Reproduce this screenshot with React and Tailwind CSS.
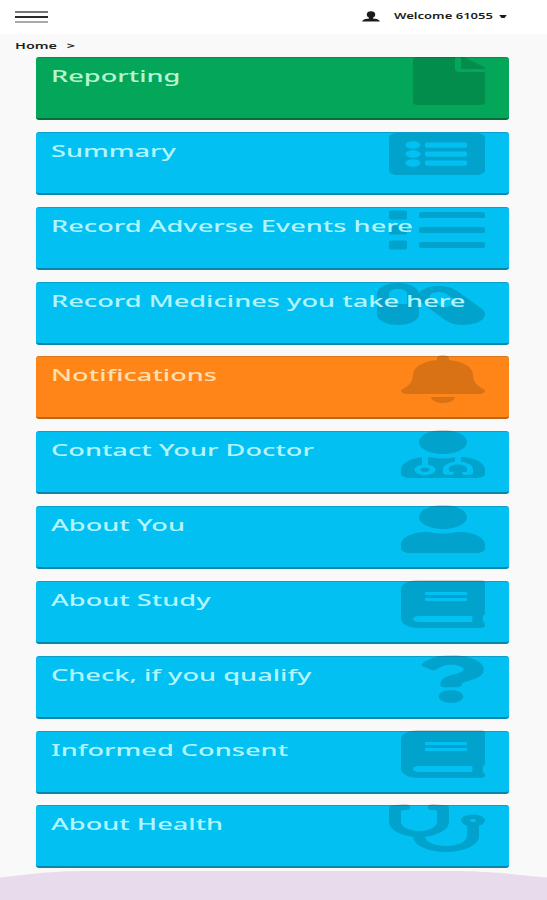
import {
  FaBell,
  FaBook,
  FaCapsules,
  FaFile,
  FaList,
  FaListAlt,
  FaQuestion,
  FaStethoscope,
  FaUser,
  FaUserMd
} from 'react-icons/fa';

const green = 'bg-[#04a65a] border-t-[#0a8a4e] border-b-[#04703c] text-[#b5f5cf]';
const blue = 'bg-[#02c0f1] border-t-[#0aa0cb] border-b-[#0a86ab] text-[#b3f5ff]';
const orange = 'bg-[#ff8519] border-t-[#d9781f] border-b-[#b8651a] text-[#ffdfae]';

const tiles = [
  { label: 'Reporting', icon: FaFile, color: green, size: '-top-[1px] w-[72px]' },
  { label: 'Summary', icon: FaListAlt, color: blue, size: '-top-[3px] w-[96px]' },
  { label: 'Record Adverse Events here', icon: FaList, color: blue, size: '-top-[2px] w-[96px]' },
  { label: 'Record Medicines you take here', icon: FaCapsules, color: blue, size: '-top-[3px] w-[108px]' },
  { label: 'Notifications', icon: FaBell, color: orange, size: '-top-[2px] w-[84px]' },
  { label: 'Contact Your Doctor', icon: FaUserMd, color: blue, size: '-top-[2px] w-[84px]' },
  { label: 'About You', icon: FaUser, color: blue, size: '-top-[2px] w-[84px]' },
  { label: 'About Study', icon: FaBook, color: blue, size: '-top-[2px] w-[84px]' },
  { label: 'Check, if you qualify', icon: FaQuestion, color: blue, size: '-top-[2px] w-[68px]' },
  { label: 'Informed Consent', icon: FaBook, color: blue, size: '-top-[2px] w-[84px]' },
  { label: 'About Health', icon: FaStethoscope, color: blue, size: '-top-[2px] w-[96px]' }
];

function Header() {
  return (
    <header className="flex h-[34px] items-start justify-between bg-white pl-[15px] pr-[39px]">
      <button type="button" aria-label="Menu" className="mt-[11px] flex w-[33px] flex-col gap-[3px]">
        <span className="h-[2px] w-full bg-[#77777a]" />
        <span className="h-[2px] w-full bg-[#2c2c30]" />
        <span className="h-[2px] w-full bg-[#a9a9ab]" />
      </button>
      <div className="mt-[10px] flex items-center text-[#1c1c1c]">
        <svg viewBox="0 0 18 11" className="h-[11px] w-[18px]" fill="currentColor">
          <ellipse cx="9" cy="3.6" rx="4.2" ry="3.4" />
          <path d="M7 6h4v1.6c3 .3 6.400 1 6.800 2.900H.2C.6 8.600 4 7.900 7 7.600z" />
        </svg>
        <span className="ml-[14px] w-[100px] whitespace-nowrap text-[9px] font-semibold leading-[12px]">
          <span className="inline-block origin-left scale-x-[1.45]">Welcome 61055</span>
        </span>
        <svg viewBox="0 0 10 4" className="ml-[4px] h-[3px] w-[10px]" fill="currentColor">
          <path d="M0 0h10L7 4H3z" />
        </svg>
      </div>
    </header>
  );
}

function Tile({ label, icon: Icon, color, size }) {
  return (
    <a
      href="#"
      className={`relative block h-[63px] rounded-[3px] border-t border-b-2 pl-[15px] pt-[6px] ${color}`}
    >
      <Icon
        preserveAspectRatio="none"
        className={`absolute right-[24px] h-[48px] text-black/15 ${size}`}
      />
      <span className="relative inline-block origin-left scale-x-[1.7] whitespace-nowrap text-[16px] font-medium leading-[22px]">
        {label}
      </span>
    </a>
  );
}

export default function App() {
  return (
    <div className="flex h-[900px] w-[547px] flex-col overflow-hidden bg-[#f9f9f9] font-['Noto_Sans',sans-serif]">
      <Header />
      <nav className="flex h-[23px] items-center pl-[15px] text-[9px] font-semibold leading-[12px] text-[#222]">
        <span className="inline-block origin-left scale-x-[1.6] whitespace-nowrap">
          Home<span className="ml-[6px] font-bold">&gt;</span>
        </span>
      </nav>
      <main className="flex flex-col gap-[11.850px] pl-[36px] pr-[38px]">
        {tiles.map((tile) => (
          <Tile key={tile.label} {...tile} />
        ))}
      </main>
      <svg viewBox="0 0 547 30" className="mt-auto h-[30px] w-full shrink-0" preserveAspectRatio="none">
        <path d="M0 7.500C25 5 45 1.500 80 1H460C495 1.500 520 5 547 7.500V30H0z" fill="#e8dcec" />
      </svg>
    </div>
  );
}
